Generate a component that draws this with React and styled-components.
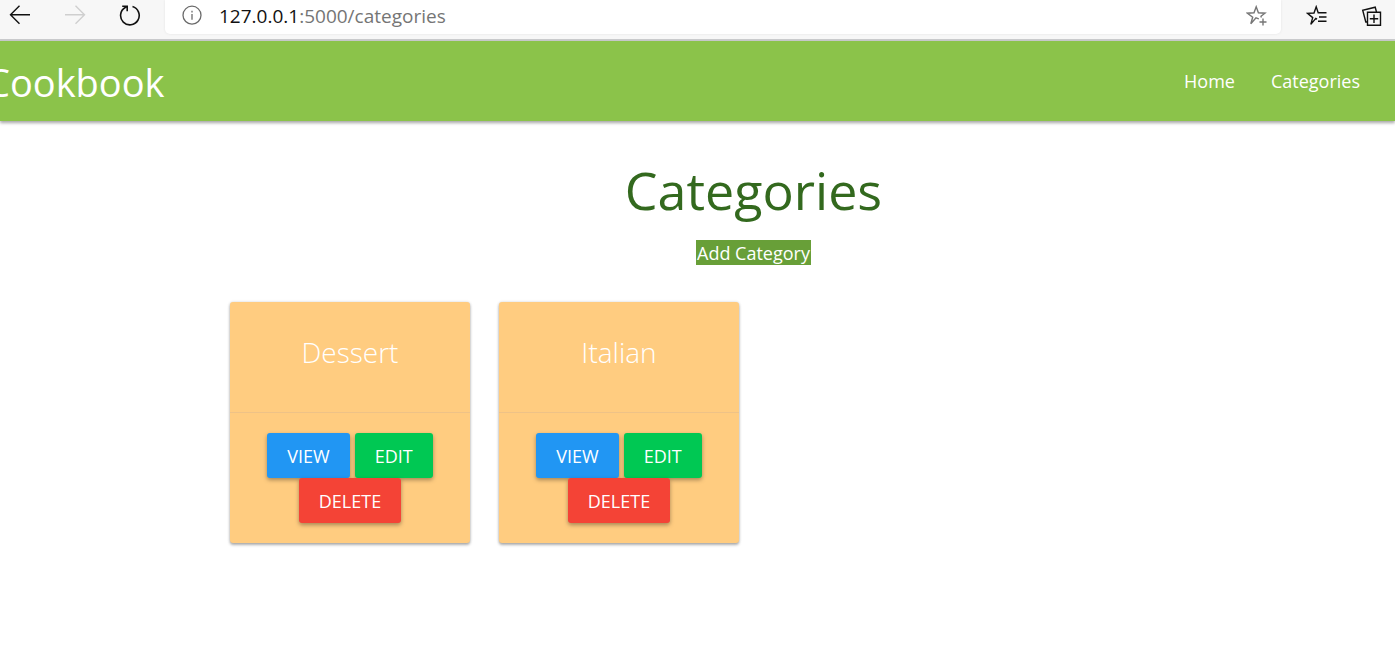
import React from 'react';
import styled, { createGlobalStyle } from 'styled-components';

const GlobalStyle = createGlobalStyle`
  * { box-sizing: border-box; }
  body {
    margin: 0;
    background: #fff;
    font-family: "Segoe UI", "Open Sans", "Noto Sans", sans-serif;
    font-size: 18px;
    overflow-x: hidden;
  }
`;

const Toolbar = styled.div`
  display: flex;
  align-items: flex-start;
  height: 41px;
  background: #f7f7f7;
  border-bottom: 2px solid #cacbcd;
`;

const IconButton = styled.button`
  display: flex;
  flex: none;
  align-items: center;
  justify-content: center;
  width: ${(p) => p.$width || 55}px;
  height: 32px;
  padding: 0;
  border: 0;
  background: none;
  color: ${(p) => p.$color || '#111'};
`;

const NavButtons = styled.div`
  display: flex;
  flex: none;
  width: 165px;
`;

const AddressBar = styled.div`
  display: flex;
  flex: 1;
  min-width: 0;
  height: 34px;
  background: #fff;
  border-radius: 0 0 5px 5px;
  box-shadow: 0 0 3px rgba(0, 0, 0, 0.08);
`;

const Address = styled.div`
  flex: 1;
  min-width: 0;
  font-size: 19px;
  line-height: 32px;
  color: #757575;
`;

const Host = styled.span`
  color: #111;
`;

const ToolbarActions = styled.div`
  display: flex;
  flex: none;
  width: 114px;
  padding-left: 8px;
`;

const Nav = styled.nav`
  display: flex;
  justify-content: space-between;
  height: 80px;
  background: #8bc34a;
  box-shadow: 0 2px 3px rgba(0, 0, 0, 0.35);
  line-height: 80px;
`;

const Brand = styled.a`
  margin-left: -14px;
  font-size: 38px;
  line-height: 83px;
  color: #fff;
  text-decoration: none;
`;

const Menu = styled.ul`
  display: flex;
  margin: 0;
  padding: 0 17px 0 0;
  list-style: none;
`;

const MenuLink = styled.a`
  display: block;
  padding: 0 18px;
  color: #fff;
  text-decoration: none;
`;

const Main = styled.main`
  padding: 0 118px 40px 230px;
`;

const Heading = styled.h1`
  margin: 36px 0 17px;
  font-size: 52px;
  font-weight: 400;
  line-height: 66px;
  text-align: center;
  color: #33691e;
`;

const AddRow = styled.div`
  display: flex;
  justify-content: center;
`;

const AddLink = styled.a`
  padding: 2px 1px 0;
  background: #689f38;
  color: #fff;
  line-height: 23px;
  text-decoration: none;
`;

const Cards = styled.div`
  display: grid;
  grid-template-columns: repeat(4, 1fr);
  gap: 29px;
  margin-top: 37px;
`;

const Card = styled.article`
  background: #ffcc80;
  border-radius: 3px;
  box-shadow: 0 2px 3px rgba(0, 0, 0, 0.3), 0 0 3px rgba(0, 0, 0, 0.15);
`;

const CardTitle = styled.h2`
  margin: 0;
  padding: 28px 30px 37px;
  font-size: 28px;
  font-weight: 300;
  line-height: 45px;
  text-align: center;
  color: #fff;
`;

const CardActions = styled.div`
  display: flex;
  flex-wrap: wrap;
  justify-content: center;
  column-gap: 5px;
  padding: 20px 30px;
  border-top: 1px solid #eec287;
`;

const Button = styled.button`
  height: 45px;
  padding: 1px 20px 0;
  border: 0;
  border-radius: 3px;
  background: ${(p) => p.$color};
  box-shadow: 0 2px 4px rgba(0, 0, 0, 0.35);
  color: #fff;
  font-family: inherit;
  font-size: 18px;
  line-height: 44px;
  text-transform: uppercase;
`;

const Icon = ({ size = 22, children, strokeWidth = 1.4 }) => (
  <svg width={size} height={size} viewBox="0 0 22 22" fill="none" stroke="currentColor" strokeWidth={strokeWidth} aria-hidden="true">
    {children}
  </svg>
);

const categories = ['Dessert', 'Italian'];

export default function App() {
  return (
    <>
      <GlobalStyle />
      <Toolbar>
        <NavButtons>
          <IconButton $width={40} aria-label="Back">
            <Icon><path d="M21 9.8H1.5M10.5 0.8L1.5 9.8L10.5 18.8" /></Icon>
          </IconButton>
          <IconButton $width={70} $color="#cfcfcf" aria-label="Forward">
            <Icon><path d="M1 9.8H20.5M11.5 0.8L20.5 9.8L11.5 18.8" /></Icon>
          </IconButton>
          <IconButton $width={40} aria-label="Refresh">
            <Icon strokeWidth={1.6}>
              <path d="M13.5 1.6A9.3 9.3 0 1 1 6.2 2.5L8.2 1.2M3.2 1.2H8.2V6.2" />
            </Icon>
          </IconButton>
        </NavButtons>
        <AddressBar>
          <IconButton $width={54} $color="#6b6b6b" aria-label="Site information">
            <Icon strokeWidth={1.3}>
              <circle cx="11" cy="10.2" r="9" />
              <path d="M11 9V14.7M11 5.8V7.4" />
            </Icon>
          </IconButton>
          <Address><Host>127.0.0.1</Host>:5000/categories</Address>
          <IconButton $width={48} $color="#767676" aria-label="Add to favorites">
            <Icon>
              <path d="M12.8 13.8L10 12.8L4.8 18.8L6.7 12.2L1.5 8.2L8 7.8L10.2 1.8L12.4 7.8L19 8.2L15 11.3L15.4 12.5M17 13.5V20.5M13.5 17H20.5" />
            </Icon>
          </IconButton>
        </AddressBar>
        <ToolbarActions>
          <IconButton aria-label="Favorites">
            <Icon>
              <path d="M11 14.2L9.8 13.4L4.8 19.4L6.7 12.6L1.5 8.4L8 8L10.2 1.8L12.2 7.8H20.5M13 12H20.5M12 16.2H20.5" />
            </Icon>
          </IconButton>
          <IconButton aria-label="Collections">
            <Icon>
              <path d="M6.5 7.2H19.5V20.2H6.5ZM13 9.5V17.9M8.8 13.7H17.2M15.5 7L14.2 2.2L1.7 5.2L4.8 17H6.5" />
            </Icon>
          </IconButton>
        </ToolbarActions>
      </Toolbar>
      <Nav>
        <Brand href="#home">Cookbook</Brand>
        <Menu>
          <li><MenuLink href="#home">Home</MenuLink></li>
          <li><MenuLink href="#categories">Categories</MenuLink></li>
        </Menu>
      </Nav>
      <Main>
        <Heading>Categories</Heading>
        <AddRow><AddLink href="#add">Add Category</AddLink></AddRow>
        <Cards>
          {categories.map((name) => (
            <Card key={name}>
              <CardTitle>{name}</CardTitle>
              <CardActions>
                <Button type="button" $color="#2196f3">View</Button>
                <Button type="button" $color="#00c853">Edit</Button>
                <Button type="button" $color="#f44336">Delete</Button>
              </CardActions>
            </Card>
          ))}
        </Cards>
      </Main>
    </>
  );
}
